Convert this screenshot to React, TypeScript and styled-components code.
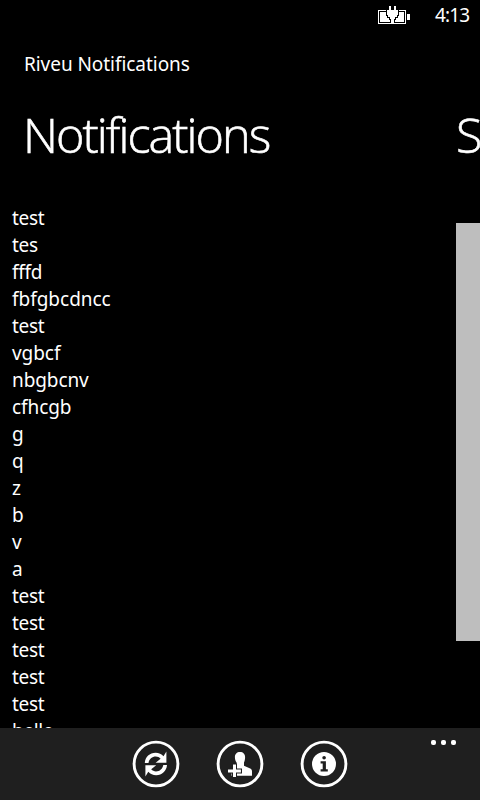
import React from 'react';
import styled, { createGlobalStyle } from 'styled-components';

const GlobalStyle = createGlobalStyle`
  html, body { margin: 0; padding: 0; background: #000; }
  * { box-sizing: border-box; }
`;

const Phone = styled.div`
  display: flex;
  flex-direction: column;
  width: 480px;
  height: 800px;
  overflow: hidden;
  background: #000;
  color: #fff;
  font-family: 'Noto Sans', 'Open Sans', sans-serif;
`;

const StatusBar = styled.header`
  display: flex;
  justify-content: flex-end;
  align-items: flex-start;
  flex: none;
  height: 32px;
  padding: 6px 11px 0 0;
`;

const Clock = styled.span`
  width: 34px;
  margin-left: 25px;
  margin-top: -4px;
  font-size: 19px;
  line-height: 26px;
  letter-spacing: -0.9px;
  white-space: nowrap;
`;

const AppTitle = styled.div`
  flex: none;
  height: 42px;
  padding: 18px 0 0 24px;
  font-size: 19px;
  line-height: 28px;
  letter-spacing: -0.05px;
`;

const Pages = styled.main`
  display: flex;
  flex: 1;
  min-height: 0;
  overflow: hidden;
`;

const Page = styled.section<{ $width: number }>`
  display: flex;
  flex-direction: column;
  flex: none;
  width: ${(p) => p.$width}px;
  overflow: hidden;
`;

const PageTitle = styled.h1<{ $indent: number }>`
  flex: none;
  height: 130px;
  margin: 0;
  padding: 25px 0 0 ${(p) => p.$indent}px;
  font-family: 'Open Sans', 'Noto Sans', sans-serif;
  font-size: 48.5px;
  font-weight: 300;
  line-height: 70px;
  letter-spacing: -1.95px;
  white-space: nowrap;
  -webkit-text-stroke: 0.6px #fff;
`;

const List = styled.ul`
  flex: 1;
  min-height: 0;
  margin: 0;
  padding: 0 0 0 12px;
  overflow: hidden;
  list-style: none;
`;

const Item = styled.li<{ $tracking: number }>`
  height: 27px;
  font-size: 19px;
  line-height: 28px;
  letter-spacing: ${(p) => p.$tracking}px;
  font-variant-ligatures: none;
  white-space: nowrap;
`;

const Panel = styled.div`
  height: 418px;
  margin-top: 19px;
  background: #bebebe;
`;

const AppBar = styled.footer`
  display: grid;
  grid-template-columns: 1fr auto 1fr;
  flex: none;
  height: 72px;
  background: #1f1f1f;
`;

const Actions = styled.nav`
  display: flex;
  grid-column: 2;
  gap: 36px;
  padding-top: 12px;
`;

const Button = styled.button`
  width: 48px;
  height: 48px;
  padding: 0;
  border: 0;
  background: none;
  color: #fff;
  svg { display: block; }
`;

const More = styled.div`
  display: flex;
  justify-content: flex-end;
  gap: 5px;
  padding: 12px 24px 0 0;
`;

const Dot = styled.i`
  width: 5px;
  height: 5px;
  border-radius: 2px;
  background: #fff;
`;

const BatteryIcon = () => (
  <svg width="32" height="18" viewBox="0 0 32 18" shapeRendering="crispEdges" fill="#fff">
    <path d="M0.5 4.5H27.5V17.5H0.5Z" fill="none" stroke="#fff" />
    <path d="M2 6H26V16H2Z" />
    <path d="M29 8H32V14H29Z" />
    <path d="M8 3H21V10H20V12H18V14H17V17H12V14H11V12H9V10H8Z" fill="#000" />
    <path d="M11 0H13V4H16V0H18V4H20V9H19V11H17V13H16V18H13V13H12V11H10V9H9V4H11Z" />
  </svg>
);

const Ring = ({ children }: { children: React.ReactNode }) => (
  <svg width="48" height="48" viewBox="0 0 48 48" fill="currentColor">
    <circle cx="24" cy="24" r="21.9" fill="none" stroke="currentColor" strokeWidth="2.9" />
    {children}
  </svg>
);

const RefreshIcon = () => (
  <Ring>
    <path d="M12.8 23C13.2 17 17.7 12.8 23.6 12.8C26.8 12.8 29.6 14.1 31.5 16.2L34.4 11.5V22.8H23.6L28.6 18.8C27.3 17.4 25.7 16.6 23.8 16.6C20.1 16.6 17.1 19.2 16.5 23Z" />
    <path d="M35 25C34.6 31 30.1 35.2 24.2 35.2C21 35.2 18.2 33.9 16.3 31.8L13.4 36.5V25.2H24.2L19.2 29.2C20.5 30.6 22.1 31.4 24 31.4C27.7 31.4 30.7 28.8 31.3 25Z" />
  </Ring>
);

const AddUserIcon = () => (
  <Ring>
    <path d="M24 12C27.2 12 29.1 14 29.1 17.2C29.1 19.4 28.6 21.2 28 22.4V25.8L34.2 28.6C35.5 29.3 36 30.2 36 31.5V35.8H15.5V29.5L20.6 26V22.4C19.6 21.2 18.9 19.4 18.9 17.2C18.9 14 20.8 12 24 12Z" />
    <path d="M16 23.5H21V28.5H26V33.5H21V38H16V33.5H11V28.5H16Z" fill="#1f1f1f" />
    <path d="M17 24.5H20V29.5H24.9V32.5H20V37H17V32.5H12V29.5H17Z" />
  </Ring>
);

const InfoIcon = () => (
  <Ring>
    <circle cx="24" cy="24" r="12" />
    <circle cx="24.1" cy="17.7" r="1.8" fill="#1f1f1f" />
    <path d="M20.6 21.3H25.9V29.3H27.8V31.6H20.6V29.3H22.7V23.5H20.6Z" fill="#1f1f1f" />
  </Ring>
);

const items: { text: string; tracking?: number }[] = [
  { text: 'test' },
  { text: 'tes' },
  { text: 'fffd', tracking: -0.25 },
  { text: 'fbfgbcdncc', tracking: -0.02 },
  { text: 'test' },
  { text: 'vgbcf', tracking: -0.05 },
  { text: 'nbgbcnv', tracking: -0.1 },
  { text: 'cfhcgb', tracking: -0.08 },
  { text: 'g' },
  { text: 'q' },
  { text: 'z' },
  { text: 'b' },
  { text: 'v' },
  { text: 'a' },
  { text: 'test' },
  { text: 'test' },
  { text: 'test' },
  { text: 'test' },
  { text: 'test' },
  { text: 'hello' },
];

export default function App() {
  return (
    <Phone>
      <GlobalStyle />
      <StatusBar>
        <BatteryIcon />
        <Clock>4:13</Clock>
      </StatusBar>
      <AppTitle>Riveu Notifications</AppTitle>
      <Pages>
        <Page $width={456}>
          <PageTitle $indent={23}>Notifications</PageTitle>
          <List>
            {items.map((item, i) => (
              <Item key={i} $tracking={item.tracking ?? -0.35}>{item.text}</Item>
            ))}
          </List>
        </Page>
        <Page $width={24}>
          <PageTitle $indent={0}>S</PageTitle>
          <Panel />
        </Page>
      </Pages>
      <AppBar>
        <Actions>
          <Button aria-label="refresh"><RefreshIcon /></Button>
          <Button aria-label="add user"><AddUserIcon /></Button>
          <Button aria-label="about"><InfoIcon /></Button>
        </Actions>
        <More><Dot /><Dot /><Dot /></More>
      </AppBar>
    </Phone>
  );
}
